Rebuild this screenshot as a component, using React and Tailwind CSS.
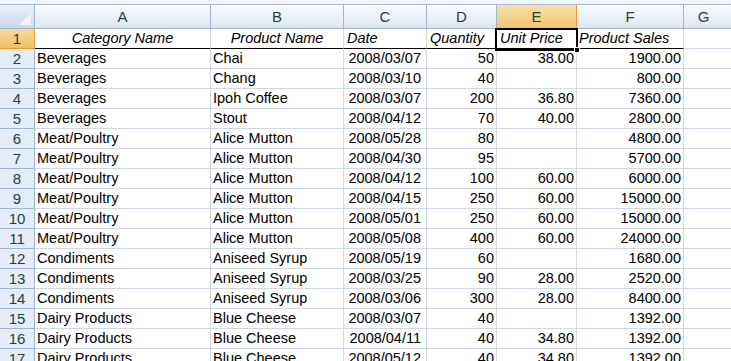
import React from 'react';

const COLS = [
  { key: 'A', w: 'w-[176px]' },
  { key: 'B', w: 'w-[133px]' },
  { key: 'C', w: 'w-[83px]' },
  { key: 'D', w: 'w-[70px]' },
  { key: 'E', w: 'w-[80px]' },
  { key: 'F', w: 'w-[107px]' },
];

const rows = [
  ['Beverages', 'Chai', '2008/03/07', '50', '38.00', '1900.00'],
  ['Beverages', 'Chang', '2008/03/10', '40', '', '800.00'],
  ['Beverages', 'Ipoh Coffee', '2008/03/07', '200', '36.80', '7360.00'],
  ['Beverages', 'Stout', '2008/04/12', '70', '40.00', '2800.00'],
  ['Meat/Poultry', 'Alice Mutton', '2008/05/28', '80', '', '4800.00'],
  ['Meat/Poultry', 'Alice Mutton', '2008/04/30', '95', '', '5700.00'],
  ['Meat/Poultry', 'Alice Mutton', '2008/04/12', '100', '60.00', '6000.00'],
  ['Meat/Poultry', 'Alice Mutton', '2008/04/15', '250', '60.00', '15000.00'],
  ['Meat/Poultry', 'Alice Mutton', '2008/05/01', '250', '60.00', '15000.00'],
  ['Meat/Poultry', 'Alice Mutton', '2008/05/08', '400', '60.00', '24000.00'],
  ['Condiments', 'Aniseed Syrup', '2008/05/19', '60', '', '1680.00'],
  ['Condiments', 'Aniseed Syrup', '2008/03/25', '90', '28.00', '2520.00'],
  ['Condiments', 'Aniseed Syrup', '2008/03/06', '300', '28.00', '8400.00'],
  ['Dairy Products', 'Blue Cheese', '2008/03/07', '40', '', '1392.00'],
  ['Dairy Products', 'Blue Cheese', '2008/04/11', '40', '34.80', '1392.00'],
  ['Dairy Products', 'Blue Cheese', '2008/05/12', '40', '34.80', '1392.00'],
];

const align = ['text-left', 'text-left', 'text-right', 'text-right', 'text-right', 'text-right'];

function RowHead({ n, active }) {
  return (
    <div
      className={
        'w-[35px] shrink-0 border-r border-b text-center text-[15px] leading-[19px] text-[#27413e] ' +
        (active
          ? 'bg-gradient-to-b from-[#f9d99f] to-[#f1c15f] border-[#f29536]'
          : 'bg-[#e4ecf7] border-[#9eb6ce]')
      }
    >
      {n}
    </div>
  );
}

export default function App() {
  return (
    <div
      className="relative w-[731px] h-[361px] overflow-hidden bg-white text-[14.5px] text-black"
      style={{ fontFamily: '"Liberation Sans", Arial, sans-serif' }}
    >
      <div className="h-[5px] bg-[#f2f5f9] border-b border-[#a7bcd6]" />

      {/* column headers */}
      <div className="flex h-[24px] text-[15px] text-[#27413e]">
        <div className="w-[35px] shrink-0 border-r border-b border-[#9eb6ce] bg-gradient-to-b from-[#e9f0f9] to-[#c9d8ec] relative">
          <svg className="absolute right-[3px] bottom-[3px]" width="12" height="12" viewBox="0 0 12 12">
            <polygon points="12,0 12,12 0,12" fill="#f3f5f8" />
          </svg>
        </div>
        {COLS.map(c => (
          <div
            key={c.key}
            className={
              c.w +
              ' shrink-0 border-r border-b text-center leading-[23px] ' +
              (c.key === 'E'
                ? 'bg-gradient-to-b from-[#fae0ac] to-[#f2c46a] border-[#f29536]'
                : 'bg-gradient-to-b from-[#f9fbfd] to-[#dde6f1] border-[#9eb6ce]')
            }
          >
            {c.key}
          </div>
        ))}
        <div className="flex-1 border-b border-[#9eb6ce] bg-gradient-to-b from-[#f9fbfd] to-[#dde6f1] text-center leading-[23px] pr-[8px]">
          G
        </div>
      </div>

      {/* row 1 */}
      <div className="flex h-[20px]">
        <RowHead n={1} active />
        <div className="w-[176px] shrink-0 border-r border-r-[#d0d7e5] border-b border-b-black text-center italic leading-[19px]">Category Name</div>
        <div className="w-[133px] shrink-0 border-r border-r-[#d0d7e5] border-b border-b-black text-center italic leading-[19px]">Product Name</div>
        <div className="w-[83px] shrink-0 border-r border-r-[#d0d7e5] border-b border-b-black px-[3px] italic leading-[19px] whitespace-nowrap overflow-hidden">Date</div>
        <div className="w-[70px] shrink-0 border-r border-r-[#d0d7e5] border-b border-b-black px-[3px] italic leading-[19px] whitespace-nowrap overflow-hidden">Quantity</div>
        <div className="w-[80px] shrink-0 border-r border-r-[#d0d7e5] border-b border-b-black px-[3px] italic leading-[19px] whitespace-nowrap overflow-hidden">Unit Price</div>
        <div className="w-[107px] shrink-0 border-r border-r-[#d0d7e5] border-b border-b-black px-[2px] italic leading-[19px] whitespace-nowrap overflow-hidden">Product Sales</div>
        <div className="flex-1 border-b border-[#d0d7e5]" />
      </div>

      {rows.map((r, i) => (
        <div key={i} className="flex h-[20px]">
          <RowHead n={i + 2} />
          {r.map((v, j) => (
            <div
              key={j}
              className={
                COLS[j].w +
                ' shrink-0 border-r border-b border-[#d0d7e5] whitespace-nowrap overflow-hidden leading-[19px] ' +
                align[j] +
                (j === 2 ? ' pr-[5px]' : ' px-[2px]')
              }
            >
              {v}
            </div>
          ))}
          <div className="flex-1 border-b border-[#d0d7e5]" />
        </div>
      ))}

      {/* selected cell E1 */}
      <div className="absolute left-[495px] top-[28px] w-[83px] h-[23px] border-2 border-black pointer-events-none" />
      <div className="absolute left-[574px] top-[47px] w-[6px] h-[6px] bg-black border border-white" />
    </div>
  );
}
